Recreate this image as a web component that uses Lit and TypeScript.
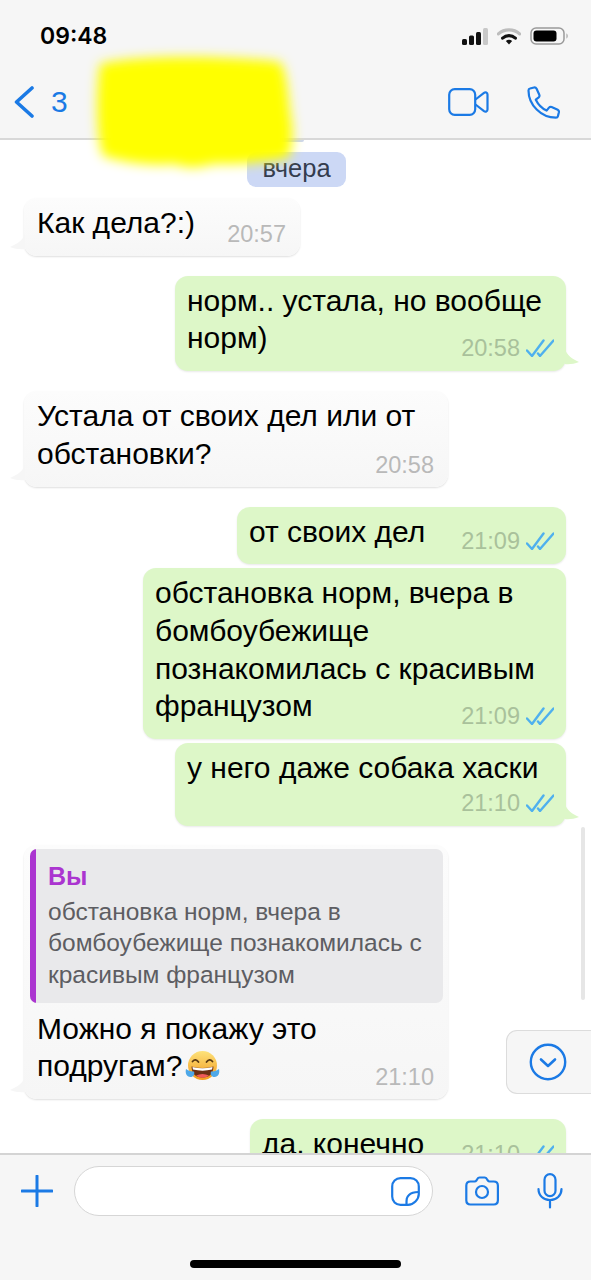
import { LitElement, html, css, svg } from "lit";
import { customElement } from "lit/decorators.js";

type Msg = { t: string; time: string; out: boolean; w: number; gap: string; tail?: boolean; wrapTime?: boolean };

const msgsA: Msg[] = [
  { t: "Как дела?:)", time: "20:57", out: false, w: 276, gap: "first", tail: true },
  { t: "норм.. устала, но вообще\nнорм)", time: "20:58", out: true, w: 391, gap: "group", tail: true },
  { t: "Устала от своих дел или от\nобстановки?", time: "20:58", out: false, w: 424, gap: "group", tail: true },
  { t: "от своих дел", time: "21:09", out: true, w: 329, gap: "group" },
  { t: "обстановка норм, вчера в\nбомбоубежище\nпознакомилась с красивым\nфранцузом", time: "21:09", out: true, w: 423, gap: "cont" },
  { t: "у него даже собака хаски", time: "21:10", out: true, w: 391, gap: "cont", tail: true, wrapTime: true },
];

const checks = svg`<path d="M1 11.500 6 17 17.500 1.500M12 14.500 14 17 27.500 1.500" fill="none" stroke="#4fb0ee" stroke-width="2.400" stroke-linecap="round" stroke-linejoin="round"/>`;

@customElement("app-root")
export class AppRoot extends LitElement {
  static styles = css`
    :host { display: block; width: 591px; height: 1280px; position: relative; overflow: hidden; background: #fff; font-family: "Liberation Sans", Arial, sans-serif; color: #000; }
    .page { display: flex; flex-direction: column; height: 1280px; }
    .top { background: #f6f6f6; border-bottom: 2px solid #d8d8d8; height: 138px; display: flex; flex-direction: column; flex: none; }
    .status { height: 72px; display: flex; align-items: center; justify-content: space-between; padding: 0 21px 0 40px; }
    .clock { font: 600 23px Inter, "Liberation Sans", sans-serif; color: #000; }
    .sicons { display: flex; align-items: center; gap: 9px; }
    .nav { display: flex; align-items: center; height: 60px; padding: 0 30px 0 14px; color: #1b7ae5; }
    .back { display: flex; align-items: center; gap: 17px; font-size: 30px; }
    .grow { flex: 1; }
    .navr { display: flex; align-items: center; gap: 38px; }
    svg { display: block; }
    .chat { flex: 1; min-height: 0; overflow: hidden; display: flex; flex-direction: column; }
    .prev { height: 2px; width: 64px; background: #ccd5ef; border-radius: 0 0 8px 8px; align-self: flex-start; margin-left: 240px; flex: none; }
    .date { align-self: flex-start; margin: 10px 0 0 247px; width: 99px; height: 35px; background: #ccd8f5; border-radius: 9px; color: #343c4e; font-size: 25.5px; line-height: 33px; text-align: center; flex: none; }
    .b { position: relative; box-sizing: border-box; flex: none; border-radius: 13px; padding: 6px 12px 14px 13px; font-size: 30px; line-height: 37.7px; background: linear-gradient(#fcfcfc, #f6f6f6); box-shadow: 0 1px 2px rgba(0,0,0,.13); margin-left: 24px; align-self: flex-start; }
    .tx { white-space: pre-line; }
    .b.out { background: #ddf7c8; margin-left: 0; margin-right: 25px; align-self: flex-end; padding-left: 12px; box-shadow: 0 1px 2px rgba(0,0,0,.09); }
    .first { margin-top: 11px; }
    .group { margin-top: 20px; }
    .cont { margin-top: 4px; }
    .reply { margin-top: 19px; }
    .wrapt { padding-bottom: 39px; }
    .tm { position: absolute; right: 14px; bottom: 8px; font-size: 23.5px; line-height: 28px; color: #b9b9b9; white-space: nowrap; }
    .out .tm { right: 46px; color: #a9c19b; bottom: 9px; }
    .ck { position: absolute; right: 12px; bottom: 14px; }
    .clipb .tm { bottom: auto; top: 21px; }
    .clipb .ck { bottom: auto; top: 26px; }
    .tail { position: absolute; bottom: 0; }
    .b.tailed:not(.out) .tail { left: -15px; bottom: 6px; }
    .b.tailed.out .tail { right: -14px; bottom: 6px; }
    .quote { display: flex; background: #e9e9eb; border-radius: 7px; overflow: hidden; margin: -2px -7px 7px -7px; height: 154px; }
    .bar { width: 6px; background: #ab35d0; flex: none; }
    .qb { padding: 12px 0 0 12px; }
    .qn { color: #ab35d0; font-size: 25px; font-weight: 700; line-height: 30px; }
    .qt { color: #5d5d62; font-size: 24.5px; line-height: 31.5px; white-space: pre-line; margin-top: 5px; }
    .em { display: inline-block; vertical-align: -8px; margin-left: 3px; }
    .clipb { height: 70px; }
    .input-wrap { background: #f6f6f6; border-top: 2px solid #d4d4d4; height: 125px; flex: none; display: flex; flex-direction: column; }
    .bar-row { display: flex; align-items: center; padding: 11px 22px 0 21px; }
    .field { margin-left: 21px; width: 359px; height: 50px; box-sizing: border-box; border: 1.5px solid #d6d6d6; border-radius: 25px; background: #fff; display: flex; align-items: center; justify-content: flex-end; padding-right: 12px; }
    .acts { display: flex; align-items: center; gap: 38px; margin-left: 32px; }
    .home { width: 211px; height: 8px; background: #000; border-radius: 4px; margin: 44px 0 0 190px; }
    .blob { position: absolute; left: 80px; top: 40px; pointer-events: none; }
    .down { position: absolute; left: 506px; top: 1030px; width: 85px; height: 64px; box-sizing: border-box; border: 1.5px solid #dcdcdc; border-right: none; border-radius: 11px 0 0 11px; background: #f6f6f6; display: flex; align-items: center; padding-left: 22px; }
    .sb { position: absolute; left: 581px; top: 827px; width: 4px; height: 173px; border-radius: 2px; background: #e6e6e6; }
  `;

  private tail(out: boolean) {
    return out
      ? html`<svg class="tail" width="15" height="16" viewBox="0 0 15 16"><path d="M0 0C2 6 7 10 14 13 9 15 4 15.500 0 15Z" fill="#ddf7c8"/></svg>`
      : html`<svg class="tail" width="16" height="16" viewBox="0 0 16 16"><path d="M16 0C14 6 8 10 1 13 6 15 11 15.500 16 15Z" fill="#f6f6f6"/></svg>`;
  }

  private bubble(m: Msg) {
    return html`<div class="b ${m.out ? "out" : ""} ${m.gap} ${m.tail ? "tailed" : ""} ${m.wrapTime ? "wrapt" : ""}" style="width:${m.w}px"><div class="tx">${m.t}</div><span class="tm">${m.time}</span>${m.out ? html`<svg class="ck" width="28" height="18" viewBox="0 0 28 18">${checks}</svg>` : ""}${m.tail ? this.tail(m.out) : ""}</div>`;
  }

  private emoji() {
    return html`<svg class="em" width="35" height="35" viewBox="0 0 35 35">
      <defs><linearGradient id="f" x1="0" y1="0" x2="0" y2="1"><stop offset="0" stop-color="#fde27a"/><stop offset="1" stop-color="#f39a1e"/></linearGradient></defs>
      <circle cx="17.500" cy="16.500" r="14.500" fill="url(#f)"/>
      <path d="M7.500 12.500q3-3.500 6 .5M21.500 13q3-4 6-.5" fill="none" stroke="#5b3a12" stroke-width="1.800" stroke-linecap="round"/>
      <path d="M6.500 17.500q11 3 22 0q-.5 11-11 11t-11-11z" fill="#6b2f14"/>
      <path d="M7.500 18q10 2.600 20 0l-.4 2.600q-9.600 2.200-19.200 0z" fill="#fff"/>
      <path d="M11 26.500q6.500-3 13 0q-3 2.200-6.500 2.200t-6.500-2.200z" fill="#ef5a5a"/>
      <path d="M1 20c-1 4 .5 8 4.500 8 3 0 4.500-2.500 3.500-5.500-2.500 0-5.500-.5-8-2.500zM34 20c1 4-.5 8-4.500 8-3 0-4.500-2.500-3.500-5.500 2.500 0 5.500-.5 8-2.500z" fill="#4ea8e8"/>
    </svg>`;
  }

  render() {
    return html`<div class="page">
      <div class="top">
        <div class="status">
          <span class="clock">09:48</span>
          <div class="sicons">
            <svg width="26" height="17" viewBox="0 0 26 17"><rect x="0" y="11" width="5" height="6" rx="1.500" fill="#111"/><rect x="7" y="7.500" width="5" height="9.500" rx="1.500" fill="#111"/><rect x="14" y="4" width="5" height="13" rx="1.500" fill="#111"/><rect x="21" y="0" width="5" height="17" rx="1.500" fill="#c8c8c8"/></svg>
            <svg width="24" height="17" viewBox="0 0 22 16"><path d="M1 5.500C6.500.5 15.500.5 21 5.500" fill="none" stroke="#bdbdbd" stroke-width="3" stroke-linecap="round"/><path d="M5 9.500c3.500-3 8.500-3 12 0" fill="none" stroke="#111" stroke-width="3" stroke-linecap="round"/><path d="M8 12.200c1.800-1.400 4.200-1.400 6 0L11 15.500z" fill="#111"/></svg>
            <svg width="40" height="18" viewBox="0 0 40 18"><rect x="1" y="1" width="33" height="16" rx="5" fill="none" stroke="#9a9a9a" stroke-width="1.500"/><rect x="3.500" y="3.500" width="23" height="11" rx="3" fill="#000"/><path d="M36.500 6.500c1.500.5 1.500 4.500 0 5z" fill="#9a9a9a"/></svg>
          </div>
        </div>
        <div class="nav">
          <div class="back">
            <svg width="20" height="32" viewBox="0 0 20 32"><path d="M18 2 2.500 16 18 30" fill="none" stroke="#1b7ae5" stroke-width="3.600" stroke-linecap="round" stroke-linejoin="round"/></svg>
            <span>3</span>
          </div>
          <div class="grow"></div>
          <div class="navr">
            <svg width="41" height="28" viewBox="0 0 41 28"><rect x="1.200" y="1.200" width="26" height="25.600" rx="5.500" fill="none" stroke="#1b7ae5" stroke-width="2.200"/><path d="M27.500 11.500 36 4.800c1.500-1.100 3.500-.3 3.500 1.700v15c0 2-2 2.800-3.500 1.700l-8.500-6.700" fill="none" stroke="#1b7ae5" stroke-width="2.200" stroke-linejoin="round"/></svg>
            <svg width="34" height="33" viewBox="0 0 34 33"><path d="M3 2.500 7 1.500c1.200-.2 2 .2 2.600 1.300l2.700 6c.4 1 .2 1.900-.6 2.600L8.800 13.700c2.300 4.700 6 8.500 10.800 10.900l2.400-3c.7-.8 1.600-1 2.600-.6l6.100 2.700c1 .5 1.400 1.400 1.200 2.500l-1 4c-.2.900-1 1.500-2 1.500C14.200 31.700 1.500 19 1.500 4.500c0-1 .6-1.800 1.500-2z" fill="none" stroke="#1b7ae5" stroke-width="2.200" stroke-linejoin="round"/></svg>
          </div>
        </div>
      </div>

      <div class="chat">
        <div class="prev"></div>
        <div class="date">вчера</div>
        ${msgsA.map((m) => this.bubble(m))}
        <div class="b reply tailed" style="width:424px">
          <div class="quote"><div class="bar"></div><div class="qb"><div class="qn">Вы</div><div class="qt">${"обстановка норм, вчера в\nбомбоубежище познакомилась с\nкрасивым французом"}</div></div></div>
          <div>Можно я покажу это</div>
          <div>подругам?${this.emoji()}</div>
          <span class="tm">21:10</span>${this.tail(false)}
        </div>
        <div class="b out group clipb" style="width:316px"><div>да, конечно</div><span class="tm">21:10</span><svg class="ck" width="28" height="18" viewBox="0 0 28 18">${checks}</svg></div>
      </div>

      <div class="input-wrap">
        <div class="bar-row">
          <svg width="32" height="32" viewBox="0 0 32 32"><path d="M16 1v30M1 16h30" stroke="#1b7ae5" stroke-width="3" stroke-linecap="round"/></svg>
          <div class="field">
            <svg width="29" height="29" viewBox="0 0 29 29"><path d="M17 27.800H9.500C4.800 27.800 1.200 24.200 1.200 19.500V9.500C1.200 4.800 4.800 1.200 9.500 1.200h10C24.200 1.200 27.800 4.800 27.800 9.500V17C27.800 22.500 22.500 27.800 17 27.800Z" fill="none" stroke="#1b7ae5" stroke-width="2.200"/><path d="M15.500 27.500c0-6 0-7 2.500-9.500s5-3 9.500-3" fill="none" stroke="#1b7ae5" stroke-width="2.200"/></svg>
          </div>
          <div class="acts">
            <svg width="34" height="30" viewBox="0 0 34 30"><path d="M5.500 5.500h4c1 0 1.500-.4 2-1.200l.8-1.300c.5-.9 1.200-1.500 2.300-1.500h5c1 0 1.800.6 2.300 1.500l.8 1.300c.5.800 1 1.200 2 1.200h4c2.500 0 4.200 1.700 4.200 4.200v14.600c0 2.500-1.700 4.200-4.200 4.200H5.500c-2.500 0-4.200-1.700-4.200-4.200V9.700c0-2.500 1.700-4.200 4.200-4.200z" fill="none" stroke="#1b7ae5" stroke-width="2.200"/><circle cx="17" cy="16" r="6" fill="none" stroke="#1b7ae5" stroke-width="2.200"/></svg>
            <svg width="26" height="36" viewBox="0 0 26 36"><rect x="7.500" y="1.200" width="11" height="22" rx="5.500" fill="none" stroke="#1b7ae5" stroke-width="2.200"/><path d="M1.500 16c0 6.500 5 11 11.500 11s11.500-4.500 11.500-11M13 27v7.500" fill="none" stroke="#1b7ae5" stroke-width="2.200" stroke-linecap="round"/></svg>
          </div>
        </div>
        <div class="home"></div>
      </div>
    </div>

    <div class="sb"></div>
    <div class="down">
      <svg width="38" height="38" viewBox="0 0 38 38"><circle cx="19" cy="19" r="17.200" fill="none" stroke="#1b7ae5" stroke-width="2.400"/><path d="M12 16.500l7 6.500 7-6.500" fill="none" stroke="#1b7ae5" stroke-width="2.600" stroke-linecap="round" stroke-linejoin="round"/></svg>
    </div>
    <svg class="blob" width="240" height="150" viewBox="0 0 240 150">
      <defs><filter id="bl" x="-20%" y="-20%" width="140%" height="140%"><feGaussianBlur stdDeviation="6"/></filter></defs>
      <path d="M20 24C60 14 150 16 200 22c8 10 8 40 12 62 1 16 0 26-4 34-30 6-60 6-75 6-15 5-30 4-38 0-20 2-45 0-72-8C16 100 16 50 20 24Z" fill="#ffff00" filter="url(#bl)"/>
    </svg>`;
  }
}
